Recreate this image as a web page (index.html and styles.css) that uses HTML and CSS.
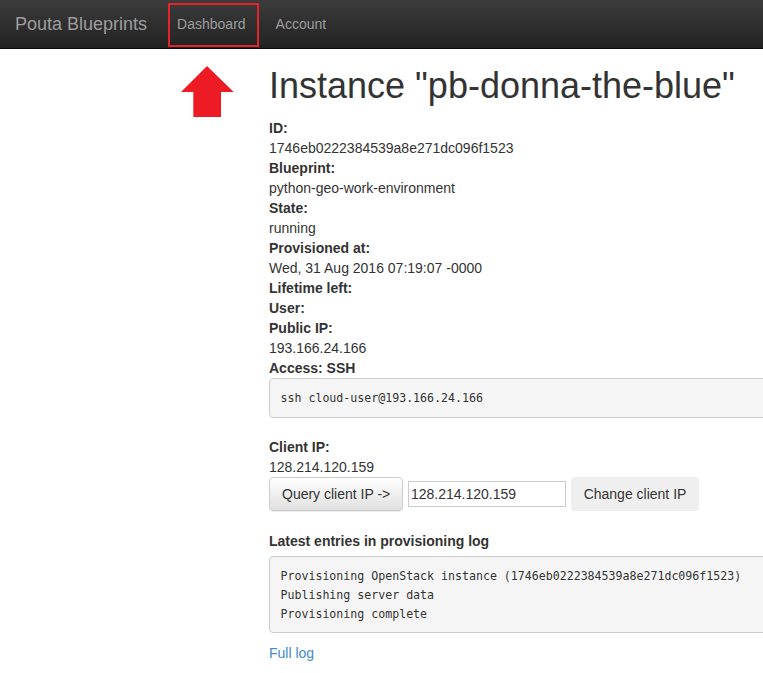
FILE: index.html
```html
<!DOCTYPE html>
<html>
<head>
<meta charset="utf-8">
<title>Pouta Blueprints</title>
<link rel="stylesheet" href="styles.css">
</head>
<body>
<nav class="navbar">
  <a class="brand" href="#">Pouta Blueprints</a>
  <a class="nav-link highlighted" href="#">Dashboard<span class="mark-box"></span></a>
  <a class="nav-link" href="#">Account</a>
</nav>
<div class="page">
  <svg class="arrow" width="60" height="56" viewBox="0 0 60 56">
    <polygon points="27,0 53.7,26 41,26 41,51 13.3,51 13.3,26 1,26" fill="#ed1c24"/>
  </svg>
  <main class="main">
    <h1 class="title">Instance "pb-donna-the-blue"</h1>
    <dl class="details">
      <dt>ID:</dt><dd>1746eb0222384539a8e271dc096f1523</dd>
      <dt>Blueprint:</dt><dd>python-geo-work-environment</dd>
      <dt>State:</dt><dd>running</dd>
      <dt>Provisioned at:</dt><dd>Wed, 31 Aug 2016 07:19:07 -0000</dd>
      <dt>Lifetime left:</dt><dd></dd>
      <dt>User:</dt><dd></dd>
      <dt>Public IP:</dt><dd>193.166.24.166</dd>
      <dt>Access: SSH</dt>
    </dl>
    <pre class="code">ssh cloud-user@193.166.24.166</pre>
    <dl class="details client">
      <dt>Client IP:</dt><dd>128.214.120.159</dd>
    </dl>
    <div class="ip-form">
      <button class="btn btn-default">Query client IP -&gt;</button>
      <input class="ip-input" type="text" value="128.214.120.159">
      <button class="btn btn-flat">Change client IP</button>
    </div>
    <h5 class="log-title">Latest entries in provisioning log</h5>
    <pre class="code log">Provisioning OpenStack instance (1746eb0222384539a8e271dc096f1523)
Publishing server data
Provisioning complete</pre>
    <a class="full-log" href="#">Full log</a>
  </main>
</div>
</body>
</html>
```
FILE: styles.css
```css
html, body {
  margin: 0;
  padding: 0;
  overflow: hidden;
}
body {
  font-family: "Liberation Sans", Arial, sans-serif;
  font-size: 14px;
  line-height: 20px;
  color: #333;
  background: #fff;
  width: 763px;
  height: 673px;
}
.navbar {
  display: flex;
  align-items: center;
  height: 48px;
  border-bottom: 1px solid #080808;
  background: linear-gradient(to bottom, #3c3c3c 0%, #222 100%);
  position: relative;
}
.brand {
  font-size: 18px;
  color: #9d9d9d;
  text-decoration: none;
  padding: 0 15px;
  line-height: 48px;
}
.nav-link {
  position: relative;
  color: #9d9d9d;
  text-decoration: none;
  padding: 0 15px;
  line-height: 48px;
}
.mark-box {
  position: absolute;
  left: 6px;
  top: 3px;
  width: 87px;
  height: 40px;
  border: 2px solid #e3242b;
}
.page {
  position: relative;
}
.arrow {
  position: absolute;
  left: 180px;
  top: 17px;
}
.main {
  padding: 17px 0 0 269px;
  width: 620px;
}
.title {
  font-size: 36px;
  font-weight: 400;
  line-height: 40px;
  margin: 0 0 12px;
  color: #333;
}
.details {
  margin: 0;
}
.details dt {
  font-weight: 700;
}
.details dd {
  margin: 0;
}
.code {
  font-family: "DejaVu Sans Mono", "Liberation Mono", monospace;
  font-size: 11.6px;
  line-height: 19px;
  background: #f5f5f5;
  border: 1px solid #ccc;
  border-radius: 4px;
  padding: 9.5px 10.5px;
  margin: 0 0 10px;
  color: #333;
}
.log {
  padding-bottom: 8px;
}
.client {
  margin-top: 19px;
}
.ip-form {
  display: flex;
  align-items: center;
  gap: 5px;
  height: 34px;
}
.btn {
  font-family: "Liberation Sans", Arial, sans-serif;
  font-size: 14px;
  line-height: 20px;
  height: 34px;
  padding: 6px 12px;
  border-radius: 4px;
  color: #333;
  white-space: nowrap;
}
.btn-default {
  width: 134px;
  background: linear-gradient(to bottom, #fff 0%, #e0e0e0 100%);
  border: 1px solid #ccc;
  box-shadow: inset 0 1px 0 rgba(255,255,255,.15), 0 1px 1px rgba(0,0,0,.075);
}
.btn-flat {
  width: 128px;
  background: #efefef;
  border: none;
}
.ip-input {
  box-sizing: border-box;
  width: 158px;
  height: 26px;
  font-family: "Liberation Sans", Arial, sans-serif;
  font-size: 14px;
  padding: 1px 2px;
  border: 1px solid #ccc;
  color: #333;
}
.log-title {
  font-size: 14px;
  font-weight: 700;
  line-height: 20px;
  margin: 20px 0 5px;
}
.full-log {
  display: block;
  color: #428bca;
  text-decoration: none;
  margin-top: 10px;
}
```
